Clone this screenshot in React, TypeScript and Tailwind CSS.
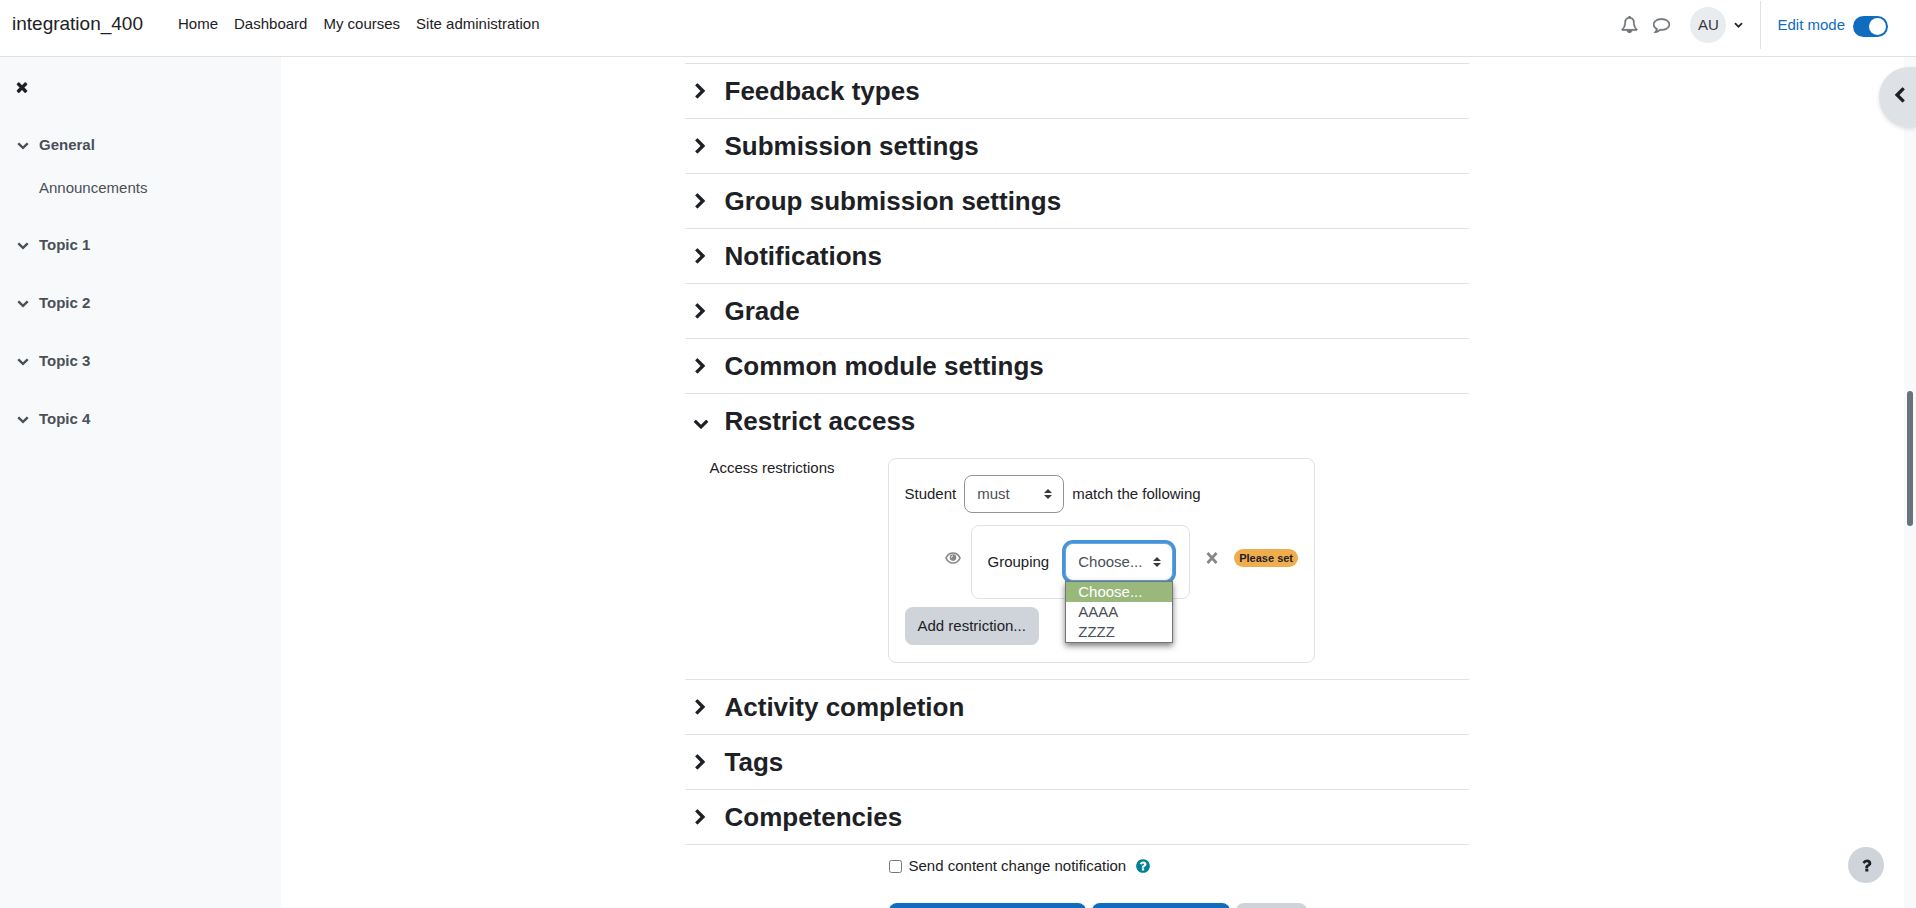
import React, { useState } from "react";

interface IconProps {
  path: string;
  className?: string;
}

const icons = {
  bell: "M912 1696q0-16-16-16-59 0-101.5-42.5t-42.5-101.5q0-16-16-16t-16 16q0 73 51.5 124.5t124.5 51.5q16 0 16-16zm-666-288h1300q-266-300-266-832 0-51-24-105t-69-103-121.5-80.5-169.5-31.5-169.5 31.5-121.5 80.5-69 103-24 105q0 532-266 832zm1482 0q0 52-38 90t-90 38h-448q0 106-75 181t-181 75-181-75-75-181h-448q-52 0-90-38t-38-90q50-42 91-88t85-119.5 74.5-158.5 50-206 19.5-260q0-152 117-282.5t307-158.5q-8-19-8-39 0-40 28-68t68-28 68 28 28 68q0 20-8 39 190 28 307 158.5t117 282.5q0 139 19.5 260t50 206 74.5 158.5 85 119.5 91 88z",
  comment:
    "M896 384q-204 0-381.5 69.5t-282 187.5-104.5 255q0 112 71.5 213.5t201.5 175.5l87 50-27 96q-24 91-70 172 152-63 275-171l43-38 57 6q69 8 130 8 204 0 381.5-69.5t282-187.5 104.5-255-104.5-255-282-187.5-381.5-69.5zm896 512q0 174-120 321.5t-326 233-450 85.5q-70 0-145-8-198 175-460 242-49 14-114 22h-5q-15 0-27-10.5t-16-27.5v-1q-3-4-.5-12t2-10 4.5-9.5l6-9 7-8.5 8-9q7-8 31-34.5t34.5-38 31-39.5 32.5-51 27-59 26-76q-157-89-247.5-220t-90.5-281q0-174 120-321.5t326-233 450-85.5 450 85.5 326 233 120 321.5z",
  down: "M1683 808l-742 741q-19 19-45 19t-45-19l-742-741q-19-19-19-45.5t19-45.5l166-165q19-19 45-19t45 19l531 531 531-531q19-19 45-19t45 19l166 165q19 19 19 45.5t-19 45.5z",
  left: "M1427 301l-531 531 531 531q19 19 19 45t-19 45l-166 166q-19 19-45 19t-45-19l-742-742q-19-19-19-45t19-45l742-742q19-19 45-19t45 19l166 166q19 19 19 45t-19 45z",
  right:
    "M1363 877l-742 742q-19 19-45 19t-45-19l-166-166q-19-19-19-45t19-45l531-531-531-531q-19-19-19-45t19-45l166-166q19-19 45-19t45 19l742 742q19 19 19 45t-19 45z",
  times:
    "M1490 1322q0 40-28 68l-136 136q-28 28-68 28t-68-28l-294-294-294 294q-28 28-68 28t-68-28l-136-136q-28-28-28-68t28-68l294-294-294-294q-28-28-28-68t28-68l136-136q28-28 68-28t68 28l294 294 294-294q28-28 68-28t68 28l136 136q28 28 28 68t-28 68l-294 294 294 294q28 28 28 68z",
  help: "M1024 1376v-192q0-14-9-23t-23-9h-192q-14 0-23 9t-9 23v192q0 14 9 23t23 9h192q14 0 23-9t9-23zm256-672q0-88-55.5-163t-138.5-116-170-41q-243 0-371 213-15 24 8 42l132 100q7 6 19 6 16 0 25-12 53-68 86-92 34-24 86-24 48 0 85.5 26t37.5 59q0 38-20 61t-68 45q-63 28-115.5 86.5t-52.5 125.5v36q0 14 9 23t23 9h192q14 0 23-9t9-23q0-19 21.5-49.5t54.5-49.5q32-18 49-28.5t46-35 44.5-48 28-60.5 12.5-81zm384 192q0 209-103 385.5t-279.5 279.5-385.5 103-385.5-103-279.5-279.5-103-385.5 103-385.5 279.5-279.5 385.5-103 385.5 103 279.5 279.5 103 385.5z",
  question:
    "M1088 1256v240q0 16-12 28t-28 12h-240q-16 0-28-12t-12-28v-240q0-16 12-28t28-12h240q16 0 28 12t12 28zm316-600q0 54-15.5 101t-35 76.5-55 59.5-57.5 43.5-61 35.5q-41 23-68.5 65t-27.5 67q0 17-12 32.5t-28 15.5h-240q-15 0-25.5-18.5t-10.5-37.5v-45q0-83 65-156.5t143-108.5q59-27 84-56t25-76q0-42-46.5-74t-107.5-32q-65 0-108 29-35 25-107 115-13 16-31 16-12 0-25-8l-164-125q-13-10-15.5-25t5.5-28q160-266 464-266 80 0 161 31t146 83 106 127.5 41 158.5z",
};

const Icon: React.FC<IconProps> = ({ path, className }) => (
  <svg viewBox="0 0 1792 1792" fill="currentColor" aria-hidden="true" className={className}>
    <path d={path} />
  </svg>
);

const EyeIcon = () => (
  <svg viewBox="0 0 16 12" fill="none" stroke="currentColor" aria-hidden="true" className="h-3 w-4">
    <path d="M1 6C2.500 2.700 5 1 8 1s5.500 1.700 7 5c-1.500 3.300-4 5-7 5S2.500 9.300 1 6z" strokeWidth="1.700" />
    <circle cx="8" cy="5.600" r="3.300" fill="currentColor" stroke="none" />
    <path d="M6.300 5.600a1.700 1.700 0 0 1 1.700-1.700" stroke="#fff" strokeWidth="1" />
  </svg>
);

const DeleteIcon = () => (
  <svg viewBox="0 0 12 12" fill="none" stroke="currentColor" strokeWidth="2.800" aria-hidden="true" className="size-3">
    <path d="M1.500 1L10.500 11M10.500 1L1.500 11" />
  </svg>
);

const Sorter = () => (
  <svg
    viewBox="0 0 4 5"
    fill="#343a40"
    aria-hidden="true"
    className="pointer-events-none absolute right-3 top-1/2 h-[10px] w-2 -translate-y-1/2"
  >
    <path d="M2 0L0 2h4zm0 5L0 3h4z" />
  </svg>
);

const navLinks = ["Home", "Dashboard", "My courses", "Site administration"];

const topics = [
  { title: "General", items: ["Announcements"] },
  { title: "Topic 1", items: [] },
  { title: "Topic 2", items: [] },
  { title: "Topic 3", items: [] },
  { title: "Topic 4", items: [] },
];

const sectionsBefore = [
  "Feedback types",
  "Submission settings",
  "Group submission settings",
  "Notifications",
  "Grade",
  "Common module settings",
];

const sectionsAfter = ["Activity completion", "Tags", "Competencies"];

const groupings = ["Choose...", "AAAA", "ZZZZ"];

const Section: React.FC<{ title: string; open?: boolean; children?: React.ReactNode }> = ({
  title,
  open,
  children,
}) => (
  <section className="border-b border-[#dee2e6]">
    <div className="flex h-[54px] items-center pl-2">
      <button
        type="button"
        aria-label={title}
        aria-expanded={!!open}
        className="flex h-9 w-4 items-center justify-center"
      >
        {open ? (
          <Icon path={icons.down} className="mt-1 size-4 shrink-0" />
        ) : (
          <Icon path={icons.right} className="size-[17px] shrink-0" />
        )}
      </button>
      <h3 className="ml-4 text-[26px] font-bold leading-8">{title}</h3>
    </div>
    {children}
  </section>
);

const Header = () => (
  <header className="flex h-[57px] shrink-0 items-start border-b border-[#dee2e6] bg-white px-3">
    <a href="#" className="mt-3 text-[19px] leading-6">
      integration_400
    </a>
    <nav className="ml-[35px] mt-3 flex gap-4 leading-6">
      {navLinks.map((link) => (
        <a key={link} href="#">
          {link}
        </a>
      ))}
    </nav>
    <div className="ml-auto flex h-[49px] items-center">
      <button type="button" aria-label="Notifications" className="text-[#6a6f73]">
        <Icon path={icons.bell} className="size-[17px] stroke-current stroke-[60]" />
      </button>
      <button type="button" aria-label="Messages" className="ml-[15px] text-[#6a6f73]">
        <Icon path={icons.comment} className="size-[17px] stroke-current stroke-[60]" />
      </button>
      <button type="button" className="ml-5 flex items-center gap-2">
        <span className="flex size-9 items-center justify-center rounded-full bg-[#e9ecef] text-[#343a40]">
          AU
        </span>
        <Icon path={icons.down} className="size-[9px]" />
      </button>
      <div className="ml-[17px] mt-px h-12 w-px bg-[#dee2e6]" />
      <label className="ml-4 flex items-center gap-2 text-[#0f6cbf]">
        Edit mode
        <input
          type="checkbox"
          role="switch"
          defaultChecked
          className="mt-1 h-[21px] w-[35px] appearance-none rounded-full bg-[#0f6cbf] before:ml-4 before:mt-[2px] before:block before:size-[17px] before:rounded-full before:bg-white"
        />
      </label>
      <div className="w-4" />
    </div>
  </header>
);

const CourseIndex = () => (
  <aside className="w-[281px] shrink-0 bg-[#f8f9fa] text-[#495057]">
    <button type="button" aria-label="Close course index" className="ml-[14px] mt-[22px] block text-[#1d2125]">
      <Icon path={icons.times} className="size-4" />
    </button>
    <ul className="mt-8 flex flex-col gap-[22px] pl-[17px]">
      {topics.map((topic) => (
        <li key={topic.title}>
          <div className="flex h-9 items-center gap-[10px] font-bold">
            <button type="button" aria-label={topic.title}>
              <Icon path={icons.down} className="size-3" />
            </button>
            <a href="#">{topic.title}</a>
          </div>
          {topic.items.map((item) => (
            <a key={item} href="#" className="ml-[22px] mt-[7px] flex h-[35px] items-center">
              {item}
            </a>
          ))}
        </li>
      ))}
    </ul>
  </aside>
);

const AccessRestrictions = () => {
  const [grouping, setGrouping] = useState(groupings[0]);

  return (
    <div className="flex pb-4 pl-[25px] pt-[10px]">
      <div className="w-[178px] shrink-0 leading-5">Access restrictions</div>
      <div className="rounded-lg border border-[#dee2e6] p-4">
        <div className="flex items-center gap-2">
          <label htmlFor="match">Student</label>
          <div className="relative">
            <select
              id="match"
              className="h-[38px] w-[100px] appearance-none rounded-lg border border-[#8f959e] bg-white px-3 text-[#495057]"
            >
              <option>must</option>
              <option>must not</option>
            </select>
            <Sorter />
          </div>
          <span>match the following</span>
        </div>

        <div className="mt-3 flex items-center pl-10">
          <button type="button" aria-label="Hide entirely" className="mb-2 text-[#888888]">
            <EyeIcon />
          </button>
          <div className="ml-[10px] flex h-[74px] items-center rounded-lg border border-[#dee2e6] px-4">
            <label htmlFor="grouping">Grouping</label>
            <div className="relative ml-4">
              <select
                id="grouping"
                value={grouping}
                onChange={(e) => setGrouping(e.target.value)}
                className="block h-[38px] w-[108px] appearance-none rounded-lg border border-[#5babf2] bg-white px-3 text-[#495057] outline-none ring-3 ring-[#4a92d3]"
              >
                {groupings.map((name) => (
                  <option key={name}>{name}</option>
                ))}
              </select>
              <Sorter />
              {/* Open option list */}
              <ul
                role="listbox"
                className="absolute left-0 top-full z-10 w-[108px] border border-[#767676] bg-white text-[#495057] shadow-[0_3px_6px_rgba(0,0,0,0.5)]"
              >
                {groupings.map((name) => (
                  <li
                    key={name}
                    role="option"
                    aria-selected={name === grouping}
                    className={`h-5 px-3 leading-5 ${name === grouping ? "bg-[#9ab87c] text-white" : ""}`}
                  >
                    {name}
                  </li>
                ))}
              </ul>
            </div>
          </div>
          <button type="button" aria-label="Delete" className="mb-2 ml-4 text-[#888888]">
            <DeleteIcon />
          </button>
          <span className="mb-2 ml-4 rounded-full bg-[#f0ad4e] px-[5px] text-[11px] font-bold leading-[18px]">
            Please set
          </span>
        </div>

        <button type="button" className="mb-px mt-2 h-[38px] rounded-lg bg-[#ced4da] px-[13px]">
          Add restriction...
        </button>
      </div>
    </div>
  );
};

export default function App() {
  return (
    <div className="flex h-screen flex-col overflow-hidden bg-white font-['Liberation_Sans',Arial,sans-serif] text-[15px] leading-[22px] text-[#1d2125]">
      <Header />
      <div className="relative flex min-h-0 flex-1">
        <CourseIndex />
        <main className="min-w-0 flex-1 overflow-hidden pr-8">
          <form className="mx-auto mt-[6px] max-w-[784px] border-t border-[#dee2e6]">
            {sectionsBefore.map((title) => (
              <Section key={title} title={title} />
            ))}
            <Section title="Restrict access" open>
              <AccessRestrictions />
            </Section>
            {sectionsAfter.map((title) => (
              <Section key={title} title={title} />
            ))}
            <div className="ml-[204px] flex h-[42px] items-center">
              <input id="notify" type="checkbox" className="size-[13px]" />
              <label htmlFor="notify" className="ml-[7px]">
                Send content change notification
              </label>
              <button type="button" aria-label="Help" className="ml-[9px] text-[#008196]">
                <Icon path={icons.help} className="size-4" />
              </button>
            </div>
            <div className="ml-[204px] mt-4 flex gap-[6px]">
              <button type="button" aria-label="Save and return to course" className="h-[38px] w-[197px] rounded-lg bg-[#0f6cbf]" />
              <button type="button" aria-label="Save and display" className="h-[38px] w-[138px] rounded-lg bg-[#0f6cbf]" />
              <button type="button" aria-label="Cancel" className="h-[38px] w-[71px] rounded-lg bg-[#ced4da]" />
            </div>
          </form>
        </main>

        {/* Scrollbar track and thumb */}
        <div className="flex w-3 shrink-0 flex-col bg-[#f8f9fa] px-[3px]">
          <div className="mt-[334px] h-[135px] rounded-full bg-[#6a737b]" />
        </div>

        <button
          type="button"
          aria-label="Open block drawer"
          className="absolute right-0 top-[10px] flex h-[60px] w-[37px] items-center rounded-l-full bg-[#dee2e6] pl-3 shadow-[0_2px_4px_rgba(0,0,0,0.12)]"
        >
          <Icon path={icons.left} className="mb-1 size-[17px]" />
        </button>
        <button
          type="button"
          aria-label="Show footer"
          className="absolute bottom-[25px] right-8 flex size-9 items-center justify-center rounded-full bg-[#ced4da]"
        >
          <Icon path={icons.question} className="size-[17px]" />
        </button>
      </div>
    </div>
  );
}
